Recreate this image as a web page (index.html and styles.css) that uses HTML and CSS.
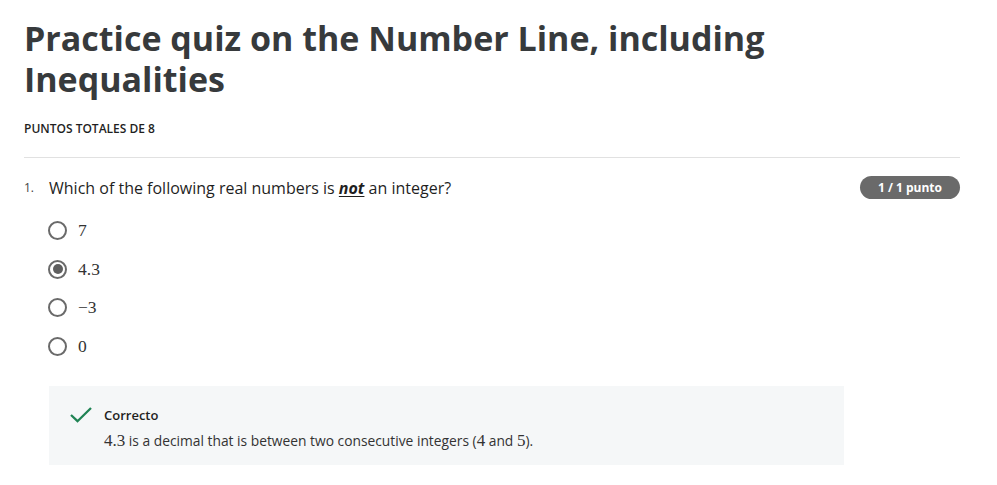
FILE: index.html
```html
<!DOCTYPE html>
<html lang="es">
<head>
<meta charset="utf-8">
<link rel="stylesheet" href="styles.css">
</head>
<body>
<main class="page">
  <header class="head">
    <h1 class="title">Practice quiz on the Number Line, including Inequalities</h1>
    <div class="total">PUNTOS TOTALES DE 8</div>
  </header>
  <section class="question">
    <div class="q-row">
      <span class="q-num">1.</span>
      <p class="q-text">Which of the following real numbers is <u><b><i>not</i></b></u> an integer?</p>
      <span class="badge">1 / 1 punto</span>
    </div>
    <ul class="options">
      <li class="opt"><span class="radio"></span><span class="math">7</span></li>
      <li class="opt"><span class="radio checked"></span><span class="math">4.3</span></li>
      <li class="opt"><span class="radio"></span><span class="math">−3</span></li>
      <li class="opt"><span class="radio"></span><span class="math">0</span></li>
    </ul>
    <div class="feedback">
      <svg class="check" width="22" height="16" viewBox="0 0 22 16"><path d="M1 8 L7.5 14.2 L21 1" fill="none" stroke="#1f8354" stroke-width="2.3"/></svg>
      <div class="fb-body">
        <div class="fb-title">Correcto</div>
        <div class="fb-text"><span class="math">4.3</span> is a decimal that is between two consecutive integers (<span class="math">4</span> and <span class="math">5</span>).</div>
      </div>
    </div>
  </section>
</main>
</body>
</html>
```
FILE: styles.css
```css
* { box-sizing: border-box; }
body {
  margin: 0;
  font-family: "Open Sans", "Noto Sans", sans-serif;
  color: #1f1f1f;
  background: #fff;
}
.page {
  padding: 18px 37px 0 24px;
}
.title {
  margin: 0;
  font-size: 34px;
  line-height: 41px;
  font-weight: 700;
  color: #373a3c;
}
.total {
  margin-top: 21px;
  font-size: 12px;
  font-weight: 600;
  color: #1f1f1f;
  line-height: 16px;
  padding-bottom: 20px;
  border-bottom: 1px solid #e1e1e1;
}
.question {
  padding-top: 18px;
}
.q-row {
  display: flex;
  align-items: center;
  height: 23px;
}
.q-num {
  font-size: 12px;
  color: #444;
  width: 25px;
}
.q-text {
  margin: 0;
  flex: 1;
  font-size: 16px;
  line-height: 22px;
  color: #1f1f1f;
}
.q-text u { text-underline-offset: 2px; }
.badge {
  background: #6a6a6a;
  color: #fff;
  font-size: 12px;
  font-weight: 700;
  line-height: 23px;
  height: 23px;
  padding: 0 18px;
  border-radius: 12px;
}
.options {
  list-style: none;
  margin: 0;
  padding: 22px 0 0 24px;
}
.opt {
  display: flex;
  align-items: center;
  height: 19px;
  margin-bottom: 19.7px;
}
.radio {
  width: 19px;
  height: 19px;
  border: 2px solid #6a6a6a;
  border-radius: 50%;
  margin-right: 11px;
  position: relative;
  flex: none;
}
.radio.checked::after {
  content: "";
  position: absolute;
  left: 2.5px;
  top: 2.5px;
  width: 10px;
  height: 10px;
  border-radius: 50%;
  background: #5f5f5f;
}
.math {
  font-family: "Liberation Serif", "DejaVu Serif", serif;
  font-size: 17.5px;
  color: #333;
}
.feedback {
  margin: 30px 116px 0 25px;
  background: #f5f7f8;
  display: flex;
  padding: 20px 20px 14px 21px;
}
.check {
  margin-top: 1px;
  margin-right: 12px;
  flex: none;
}
.fb-title {
  font-size: 13px;
  font-weight: 600;
  color: #1f1f1f;
  line-height: 18px;
}
.fb-text {
  font-size: 13.8px;
  color: #333;
  line-height: 20px;
  margin-top: 7px;
}
.fb-text .math { font-size: 17px; }
```
